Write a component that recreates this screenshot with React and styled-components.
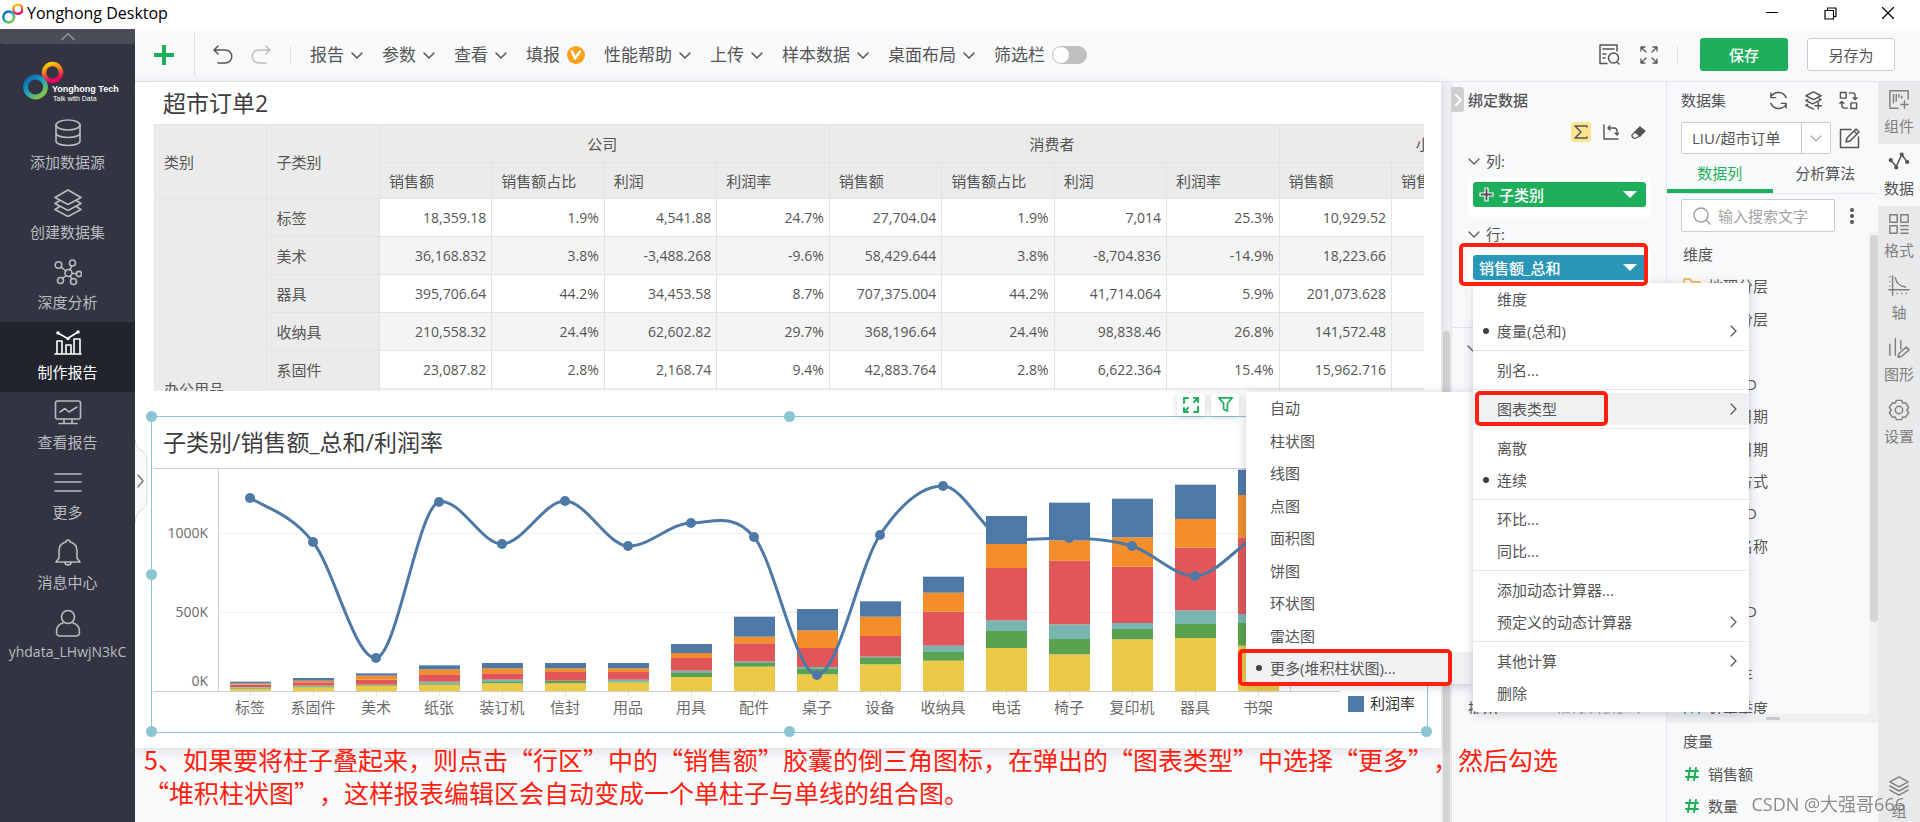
import React, { useState } from "react";
import styled, { createGlobalStyle, css } from "styled-components";

const GlobalStyle = createGlobalStyle`
  * {
    box-sizing: border-box;
  }

  body {
    margin: 0;
    overflow: hidden;
    background: #f8f9fb;
    color: #555;
    font-family: "Open Sans", "Noto Sans CJK SC", sans-serif;
    font-size: 15px;
    line-height: 20px;
  }

  button,
  input,
  select {
    font: inherit;
    color: inherit;
  }

  button {
    border: 0;
    padding: 0;
    background: none;
  }
`;

const UI_GREEN = "#1eaf5b";

/* ---------- shared ---------- */

const Svg = styled.svg`
  display: block;
  flex: none;
  fill: none;
  stroke: currentColor;
  stroke-width: ${({ $weight }) => $weight || 1.5};
  stroke-linecap: round;
  stroke-linejoin: round;
`;

const Icon = ({ size = 24, box = 24, weight, children }) => (
  <Svg
    width={size}
    height={size}
    viewBox={`0 0 ${box} ${box}`}
    $weight={weight}
    aria-hidden="true"
  >
    {children}
  </Svg>
);

const Chevron = ({ dir = "down", size = 12, weight = 1.5 }) => {
  const paths = {
    down: "M1 4l5 5 5-5",
    up: "M1 8l5-5 5 5",
    right: "M4 1l5 5-5 5",
  };
  return (
    <Icon size={size} box={12} weight={weight}>
      <path d={paths[dir]} />
    </Icon>
  );
};

const Marker = styled.span`
  position: absolute;
  border: 4px solid #ff2010;
  border-radius: 5px;
  pointer-events: none;
  z-index: 8;
`;

const Rings = ({ id }) => (
  <>
    <defs>
      <linearGradient id={`${id}-warm`} x1="0" y1="0" x2="0.3" y2="1">
        <stop offset="0" stopColor="#ffd200" />
        <stop offset="0.45" stopColor="#f58220" />
        <stop offset="1" stopColor="#e6005c" />
      </linearGradient>
      <linearGradient id={`${id}-cool`} x1="0" y1="0" x2="0.8" y2="1">
        <stop offset="0" stopColor="#0b5fae" />
        <stop offset="0.5" stopColor="#1ba1c4" />
        <stop offset="1" stopColor="#8cc63f" />
      </linearGradient>
    </defs>
    <circle cx="29.500" cy="11.500" r="8.500" stroke={`url(#${id}-warm)`} strokeWidth="4.500" />
    <circle cx="12.500" cy="26" r="10" stroke={`url(#${id}-cool)`} strokeWidth="4.800" />
  </>
);

/* ---------- title bar ---------- */

const TitleBar = styled.header`
  display: flex;
  align-items: center;
  height: 29px;
  flex: none;
  padding: 0 14px 3px 2px;
  background: #fff;
  color: #000;
`;

const AppName = styled.h1`
  flex: 1;
  margin: 0 0 0 4px;
  font-size: 16px;
  font-weight: 400;
  line-height: 20px;
`;

const WindowButton = styled.button`
  display: grid;
  place-items: center;
  width: 36px;
  height: 24px;
  margin-left: 22px;
`;

/* ---------- sidebar ---------- */

const Screen = styled.div`
  display: flex;
  flex-direction: column;
  height: 100vh;
`;

const Body = styled.div`
  display: flex;
  flex: 1;
  min-height: 0;
`;

const Sidebar = styled.nav`
  display: flex;
  flex-direction: column;
  flex: none;
  width: 135px;
  background: #323541;
  color: #b9bbc1;
`;

const FoldBar = styled.button`
  display: grid;
  place-items: center;
  height: 15px;
  background: #4a4c57;
  color: #8d8f97;
  border-radius: 0 0 3px 3px;
`;

const Brand = styled.div`
  height: 68px;
  padding: 17px 0 0 23px;
`;

const BrandText = styled.text`
  fill: #fff;
  stroke: none;
  font-family: "Liberation Sans", Arial, sans-serif;
  font-size: ${({ $small }) => ($small ? "7px" : "9px")};
  font-weight: ${({ $small }) => ($small ? 400 : 700)};
`;

const NavItem = styled.a`
  display: flex;
  flex-direction: column;
  align-items: center;
  gap: 5px;
  height: 70px;
  padding-top: 7px;
  color: inherit;
  font-size: ${({ $small }) => ($small ? 14 : 15)}px;
  text-decoration: none;
  white-space: nowrap;

  ${({ $active }) =>
    $active &&
    css`
      background: #22242d;
      color: #fff;
    `}
`;

const NAV = [
  {
    label: "添加数据源",
    icon: (
      <>
        <ellipse cx="14" cy="6" rx="12" ry="5" />
        <path d="M2 6v16c0 6 24 6 24 0V6M2 14c0 6 24 6 24 0" />
      </>
    ),
  },
  {
    label: "创建数据集",
    icon: (
      <path d="M14 1l13 7.500-13 7-13-7zM5 12l-4 2.500 13 7 13-7-4-2.500M5 18l-4 2.500 13 7 13-7-4-2.500" />
    ),
  },
  {
    label: "深度分析",
    icon: (
      <>
        <circle cx="14.500" cy="14" r="3.500" />
        <circle cx="4.500" cy="6" r="3.300" />
        <circle cx="18.500" cy="4" r="3" />
        <circle cx="25" cy="15" r="2.600" />
        <circle cx="6.500" cy="21.500" r="3" />
        <circle cx="19.500" cy="22.500" r="3" />
        <path d="M7 8l5 4M16 11l1.500-4M18 14.500h4.500M12 16.500l-3.500 3M16 17l2 3" />
      </>
    ),
  },
  {
    label: "制作报告",
    active: true,
    icon: (
      <>
        <path d="M1 25h26M3 25V12h5v13M12 25v-9h5v9M20 25V10h6v15" />
        <path d="M4 4l9.500 5.500L24 3" />
        <circle cx="4" cy="4" r="1" fill="currentColor" />
        <circle cx="14" cy="9.500" r="1" fill="currentColor" />
        <circle cx="24" cy="3" r="1" fill="currentColor" />
      </>
    ),
  },
  {
    label: "查看报告",
    icon: (
      <>
        <rect x="1.500" y="2" width="25" height="18" rx="2" />
        <path d="M6 13l5-3.500 4 3.500 8-5M10 20v4M18 20v4M5 24.500h18" />
      </>
    ),
  },
  { label: "更多", icon: <path d="M1 5h26M1 13h26M1 22h26" /> },
  {
    label: "消息中心",
    icon: (
      <path d="M14 1c-1.500 0-2 .8-2 2-4 1-7 4-7 9v7l-3 4h24l-3-4v-7c0-5-3-8-7-9 0-1.200-.5-2-2-2zM11 24c.5 2.500 5.500 2.500 6 0" />
    ),
  },
  {
    label: "yhdata_LHwjN3kC",
    small: true,
    icon: (
      <>
        <circle cx="14" cy="8" r="6.500" />
        <path d="M9 14c-4 1-6.500 4.500-6.500 9 0 2.500 1 4 3.500 4h16c2.500 0 3.500-1.500 3.500-4 0-4.500-2.500-8-6.500-9" />
      </>
    ),
  },
];

/* ---------- toolbar ---------- */

const Main = styled.main`
  display: flex;
  flex-direction: column;
  flex: 1;
  min-width: 0;
`;

const Toolbar = styled.div`
  display: flex;
  align-items: center;
  flex: none;
  height: 53px;
  padding: 0 25px 1px 18px;
  border-bottom: 1px solid #e4e6ec;
  font-size: 17px;
`;

const ToolButton = styled.button`
  display: flex;
  align-items: center;
  gap: 7px;
  margin-right: ${({ $gap = 19 }) => $gap}px;
  color: ${({ $color }) => $color || "inherit"};
  white-space: nowrap;
`;

const Rule = styled.span`
  width: 1px;
  height: ${({ $tall }) => ($tall ? 43 : 18)}px;
  margin-right: ${({ $gap }) => $gap}px;
  background: #dcdee2;
`;

const Spacer = styled.span`
  flex: 1;
`;

const SwitchLabel = styled.label`
  display: flex;
  align-items: center;
  gap: 7px;
`;

const Switch = styled.input`
  appearance: none;
  width: 35px;
  height: 18px;
  margin: 0;
  padding: 1px;
  border-radius: 9px;
  background: #bfbfbf;

  &::before {
    content: "";
    display: block;
    width: 16px;
    height: 16px;
    border-radius: 50%;
    background: #fff;
  }

  &:checked {
    background: ${UI_GREEN};
  }

  &:checked::before {
    margin-left: auto;
  }
`;

const SaveButton = styled.button`
  width: 88px;
  height: 33px;
  border-radius: 3px;
  font-size: 15px;
  background: ${UI_GREEN};
  color: #fff;
  font-weight: 500;

  ${({ $plain }) =>
    $plain &&
    css`
      margin-left: 19px;
      border: 1px solid #c9cbd0;
      background: #fff;
      color: #555;
      font-weight: 400;
    `}
`;

/* ---------- canvas ---------- */

const Workspace = styled.div`
  display: flex;
  flex: 1;
  min-height: 0;
`;

const CanvasPane = styled.section`
  position: relative;
  display: flex;
  flex: 1;
  flex-direction: column;
  min-width: 0;
`;

const Sheet = styled.div`
  display: flex;
  flex: 1;
  flex-direction: column;
  min-height: 0;
  margin-bottom: 74px;
  background: #fff;
  box-shadow: 0 2px 12px rgba(60, 70, 90, 0.16);
`;

const WidgetTitle = styled.h2`
  margin: 0;
  padding-left: ${({ $inset }) => $inset}px;
  color: #3d3d3d;
  font-size: 23px;
  font-weight: 400;
  line-height: ${({ $line }) => $line}px;
`;

const TableFrame = styled.div`
  flex: 1;
  min-height: 0;
  margin: 0 17px 0 19px;
  overflow: hidden;
`;

const PivotTable = styled.table`
  width: 1463px;
  border-collapse: collapse;
  table-layout: fixed;

  th,
  td {
    height: 38px;
    padding: 0 5px 0 9px;
    border: 1px solid #e3e3e3;
    font-weight: 400;
    text-align: left;
    white-space: nowrap;
  }

  th {
    background: #ebebeb;
  }

  thead tr + tr th {
    height: 36px;
  }

  th[colspan] {
    padding: 0 4px 0 0;
    text-align: center;
  }

  td {
    font-size: 14px;
    text-align: right;
  }

  tbody tr:nth-child(even) td {
    background: #f4f4f4;
  }
`;

const MEASURES = ["销售额", "销售额占比", "利润", "利润率"];
const ROWS = [
  ["标签", "18,359.18", "1.9%", "4,541.88", "24.7%", "27,704.04", "1.9%", "7,014", "25.3%", "10,929.52"],
  ["美术", "36,168.832", "3.8%", "-3,488.268", "-9.6%", "58,429.644", "3.8%", "-8,704.836", "-14.9%", "18,223.66"],
  ["器具", "395,706.64", "44.2%", "34,453.58", "8.7%", "707,375.004", "44.2%", "41,714.064", "5.9%", "201,073.628"],
  ["收纳具", "210,558.32", "24.4%", "62,602.82", "29.7%", "368,196.64", "24.4%", "98,838.46", "26.8%", "141,572.48"],
  ["系固件", "23,087.82", "2.8%", "2,168.74", "9.4%", "42,883.764", "2.8%", "6,622.364", "15.4%", "15,962.716"],
  [],
  [],
  [],
  [],
  [],
];

const OrdersTable = () => (
  <PivotTable>
    <thead>
      <tr>
        <th rowSpan={2}>类别</th>
        <th rowSpan={2}>子类别</th>
        <th colSpan={4}>公司</th>
        <th colSpan={4}>消费者</th>
        <th colSpan={3}>小型企业</th>
      </tr>
      <tr>
        {[...MEASURES, ...MEASURES, ...MEASURES.slice(0, 3)].map((name, i) => (
          <th key={i}>{name}</th>
        ))}
      </tr>
    </thead>
    <tbody>
      {ROWS.map((row, i) => (
        <tr key={i}>
          {i === 0 && <th rowSpan={ROWS.length}>办公用品</th>}
          <th>{row[0]}</th>
          {Array.from({ length: 11 }, (_, col) => (
            <td key={col}>{row[col + 1]}</td>
          ))}
        </tr>
      ))}
    </tbody>
  </PivotTable>
);

const ChartFrame = styled.div`
  position: relative;
  flex: none;
  margin: 25px 13px 15px 16px;
  border: 1px solid #8bc4d3;
`;

const Handle = styled.i`
  position: absolute;
  left: ${({ $x }) => $x};
  top: ${({ $y }) => $y};
  width: 11px;
  height: 11px;
  margin: -6px;
  border-radius: 50%;
  background: #8bc4d3;
`;

const ChartSvg = styled.svg`
  display: block;
  width: 100%;
  height: 264px;

  text {
    fill: #6b6b6b;
    font-size: 15px;
  }
`;

const FloatTools = styled.div`
  position: absolute;
  top: -24px;
  right: 188px;
  display: flex;
  gap: 6px;
`;

const FloatButton = styled.button`
  display: grid;
  place-items: center;
  width: 28px;
  height: 23px;
  border-radius: 4px;
  background: #fff;
  color: ${UI_GREEN};
  box-shadow: 0 1px 6px rgba(60, 70, 90, 0.25);
`;

// segments run from the axis up: yellow, green, teal, red, orange, blue
const SEGMENT_COLORS = ["#ecc948", "#5aa24f", "#79b5b1", "#e15658", "#f38e2b", "#4e79a7"];
const STACKS = [
  { name: "标签", parts: [7, 3, 2, 7, 4, 5], rate: 30 },
  { name: "系固件", parts: [11, 3, 2, 10, 5, 8], rate: 74 },
  { name: "美术", parts: [16, 3, 0, 15, 12, 7], rate: 190 },
  { name: "纸张", parts: [19, 4, 5, 22, 15, 12], rate: 34 },
  { name: "装订机", parts: [23, 4, 7, 19, 15, 16], rate: 76 },
  { name: "信封", parts: [23, 8, 0, 26, 11, 16], rate: 33 },
  { name: "用品", parts: [26, 3, 5, 23, 11, 16], rate: 78 },
  { name: "用具", parts: [42, 12, 7, 38, 15, 27], rate: 55 },
  { name: "配件", parts: [73, 11, 4, 55, 20, 60], rate: 69 },
  { name: "桌子", parts: [50, 16, 6, 57, 53, 64], rate: 207 },
  { name: "设备", parts: [80, 19, 4, 62, 58, 46], rate: 67 },
  { name: "收纳具", parts: [91, 26, 19, 102, 57, 48], rate: 18 },
  { name: "电话", parts: [129, 51, 32, 157, 72, 84], rate: 71 },
  { name: "椅子", parts: [110, 46, 44, 191, 61, 113], rate: 70 },
  { name: "复印机", parts: [155, 31, 18, 169, 88, 116], rate: 78 },
  { name: "器具", parts: [159, 42, 41, 188, 86, 103], rate: 108 },
  { name: "书架", parts: [136, 68, 27, 230, 127, 76], rate: 67 },
];

const AXIS_X = 67;
const BASE_Y = 223;
const STEP = 63;
const centerOf = (i) => AXIS_X + STEP * i + 31;

const smoothLine = (values) => {
  const slopes = values.map((v, i) => {
    const before = values[i - 1];
    const after = values[i + 1];
    if (before === undefined) return (after - v) * 0.8;
    if (after === undefined) return (v - before) * 0.8;
    const turning = (v - before) * (after - v) < 0;
    return ((after - before) / 2) * (turning ? 0.25 : 1);
  });
  return values
    .map((v, i) => {
      if (i === 0) return `M${centerOf(0)} ${v}`;
      const reach = STEP / 3;
      const c1 = `${centerOf(i - 1) + reach} ${values[i - 1] + slopes[i - 1] / 3}`;
      const c2 = `${centerOf(i) - reach} ${v - slopes[i] / 3}`;
      return `C${c1} ${c2} ${centerOf(i)} ${v}`;
    })
    .join("");
};

const ComboChart = () => {
  const axisEnd = AXIS_X + STEP * STACKS.length;
  return (
    <ChartSvg viewBox="0 0 1275 264" preserveAspectRatio="xMinYMin meet">
      <path d={`M${AXIS_X} 65.500H${axisEnd}M${AXIS_X} 144.500H${axisEnd}`} stroke="#efefef" />
      <path d="M2 0.500H1188M2 223.500H1188" stroke="#cfcfcf" />
      <path d={`M${AXIS_X - 0.5} 0V223M${axisEnd + 0.5} 0V223`} stroke="#cfcfcf" />
      {[["1000K", 70], ["500K", 149], ["0K", 218]].map(([tick, y]) => (
        <text key={tick} x="56" y={y} textAnchor="end" style={{ fontSize: 14 }}>
          {tick}
        </text>
      ))}
      {STACKS.map(({ name, parts }, i) => {
        let top = BASE_Y;
        return (
          <g key={name}>
            {parts.map((part, k) => {
              const height = part / 3;
              top -= height;
              return (
                <rect
                  key={k}
                  x={centerOf(i) - 20}
                  y={top}
                  width="41"
                  height={height}
                  fill={SEGMENT_COLORS[k]}
                />
              );
            })}
            <path d={`M${centerOf(i) + 0.5} 224v4`} stroke="#e3e3e3" />
            <text x={centerOf(i)} y="245" textAnchor="middle">
              {name}
            </text>
          </g>
        );
      })}
      <path
        d={smoothLine(STACKS.map((s) => s.rate))}
        fill="none"
        stroke="#4e79a7"
        strokeWidth="3"
      />
      {STACKS.map((s, i) => (
        <circle key={s.name} cx={centerOf(i)} cy={s.rate} r="5" fill="#4e79a7" />
      ))}
      <rect x="1196" y="228" width="16" height="16" fill="#4e79a7" />
      <text x="1218" y="241" style={{ fill: "#333" }}>
        利润率
      </text>
    </ChartSvg>
  );
};

const DrawerTab = styled.button`
  position: absolute;
  left: 0;
  top: 357px;
  color: #777;
`;

const Note = styled.p`
  position: absolute;
  left: 9px;
  bottom: 13px;
  z-index: 3;
  margin: 0;
  color: #ff1e0f;
  font-family: "Noto Sans CJK SC", sans-serif;
  font-size: 25px;
  line-height: 33px;
  text-spacing-trim: space-all;
  white-space: nowrap;
`;

const ScrollTrack = styled.div`
  display: flex;
  flex: none;
  flex-direction: column;
  align-items: center;
  width: ${({ $width }) => $width}px;
  padding-top: ${({ $offset }) => $offset}px;
  background: #f0f1f3;
`;

const ScrollThumb = styled.div`
  width: ${({ $width }) => $width}px;
  flex: ${({ $length }) => ($length ? `0 0 ${$length}px` : 1)};
  border-radius: 4px 4px ${({ $length }) => ($length ? "4px 4px" : "0 0")};
  background: #d4d4d5;
`;

/* ---------- binding panel ---------- */

const BindingPanel = styled.section`
  position: relative;
  flex: none;
  width: 215px;
  border-left: 1px solid #e4e6ec;
`;

const PanelToggle = styled.button`
  position: absolute;
  left: -1px;
  top: 5px;
  display: grid;
  place-items: center;
  width: 13px;
  height: 25px;
  border-radius: 0 3px 3px 0;
  background: #cfcfd1;
  color: #fff;
`;

const PanelHead = styled.div`
  display: flex;
  align-items: center;
  height: 38px;
  padding: 0 14px 2px 16px;
`;

const PanelTitle = styled.h3`
  margin: 0;
  font-size: 15px;
  font-weight: ${({ $bold }) => ($bold ? 500 : 400)};
  line-height: 20px;
`;

const BindingTools = styled.div`
  display: flex;
  align-items: center;
  justify-content: flex-end;
  gap: 12px;
  height: 24px;
  padding-right: 20px;
`;

const SigmaButton = styled.button`
  display: grid;
  place-items: center;
  width: 20px;
  height: 20px;
  border-radius: 3px;
  background: #fde391;
`;

const Shelf = styled.div`
  padding: 5px 15px 0 16px;
`;

const ShelfLabel = styled.div`
  display: flex;
  align-items: center;
  gap: 6px;
  height: 28px;
  padding-bottom: 4px;
`;

const DropZone = styled.div`
  min-height: ${({ $tall }) => ($tall ? 70 : 40)}px;
  padding: 5px;
  border-radius: 3px;
  background: #fff;
`;

const Capsule = styled.div`
  position: relative;
  display: flex;
  align-items: center;
  gap: 5px;
  height: 25px;
  padding: 0 9px 0 6px;
  border-radius: 3px;
  background: ${({ $color }) => $color};
  color: #fff;
  font-weight: 500;
`;

const CapsuleArrow = styled.button`
  margin-left: auto;
  border: 7px solid transparent;
  border-top-color: #fff;
  border-bottom: 0;
`;

const MarkSection = styled.div`
  display: flex;
  flex-direction: column;
  height: 387px;
  margin-top: 7px;
  padding: 8px 20px 0 15px;
  border-top: 1px solid #e4e6ec;
  overflow: hidden;
`;

const MarkRow = styled.div`
  display: flex;
  justify-content: space-between;
  flex: none;
  height: 16px;
  padding-left: 1px;
`;

const Hint = styled.span`
  color: #a9a9a9;
`;

/* ---------- context menus ---------- */

const menuBox = css`
  position: absolute;
  background: #fff;
  box-shadow: 0 2px 10px rgba(50, 55, 70, 0.25);
`;

const Menu = styled.div`
  ${menuBox}
  z-index: 5;
  top: 28px;
  left: 0;
  width: 276px;
  border-radius: 0 0 4px 4px;
  color: #555;
  font-weight: 400;
`;

const MenuGroup = styled.div`
  padding: ${({ $first }) => ($first ? 0 : 3)}px 0 3px;
  border-bottom: 1px solid #e6e8ec;

  &:last-of-type {
    border-bottom: 0;
  }
`;

const MenuItem = styled.button`
  position: relative;
  display: flex;
  align-items: center;
  width: 100%;
  height: 32px;
  padding: 0 10px 0 24px;
  background: ${({ $active }) => ($active ? "#f0f1f3" : "transparent")};
  text-align: left;

  svg {
    margin-left: auto;
  }
`;

const Dot = styled.i`
  position: absolute;
  left: 10px;
  width: 6px;
  height: 6px;
  border-radius: 50%;
  background: #404040;
`;

const SubMenu = styled.div`
  ${menuBox}
  z-index: 4;
  top: 137px;
  right: 172px;
  width: 228px;
  color: #555;
  font-weight: 400;
`;

const MENU = [
  [{ label: "维度" }, { label: "度量(总和)", dot: true, more: true }],
  [{ label: "别名..." }],
  [{ label: "图表类型", more: true, active: true, marked: true }],
  [{ label: "离散" }, { label: "连续", dot: true }],
  [{ label: "环比..." }, { label: "同比..." }],
  [{ label: "添加动态计算器..." }, { label: "预定义的动态计算器", more: true }],
  [{ label: "其他计算", more: true }, { label: "删除" }],
];

const CHART_TYPES = ["自动", "柱状图", "线图", "点图", "面积图", "饼图", "环状图", "雷达图"];

const TypeList = styled.div`
  display: grid;
  align-content: space-between;
  height: 292px;
`;

const ItemMarker = styled(Marker)`
  left: 2px;
  top: -2px;
  width: 133px;
  height: 35px;
`;

const MoreMarker = styled(Marker)`
  left: -8px;
  top: -3px;
  width: 214px;
  height: 37px;
`;

const CapsuleMarker = styled(Marker)`
  left: -14px;
  top: -12px;
  width: 189px;
  height: 43px;
`;

const MeasureMenu = () => (
  <Menu role="menu">
    {MENU.map((group, i) => (
      <MenuGroup key={i} $first={i === 0}>
        {group.map((item) => (
          <MenuItem key={item.label} $active={item.active} role="menuitem">
            {item.dot && <Dot />}
            {item.label}
            {item.more && <Chevron dir="right" weight={1.2} />}
            {item.marked && <ItemMarker />}
          </MenuItem>
        ))}
      </MenuGroup>
    ))}
  </Menu>
);

const ChartTypeMenu = () => (
  <SubMenu role="menu">
    <TypeList>
      {CHART_TYPES.map((type) => (
        <MenuItem key={type} role="menuitem">
          {type}
        </MenuItem>
      ))}
      <MenuItem $active role="menuitem">
        <Dot />
        更多(堆积柱状图)...
        <MoreMarker />
      </MenuItem>
    </TypeList>
  </SubMenu>
);

/* ---------- data panel ---------- */

const DataPanel = styled.section`
  display: flex;
  flex-direction: column;
  flex: none;
  width: 212px;
  border-left: 1px solid #e4e6ec;
  overflow: hidden;

  > * {
    flex: none;
  }
`;

const DataHead = styled.div`
  display: flex;
  align-items: center;
  gap: 16px;
  height: 38px;
  padding: 0 20px 2px 14px;

  h3 {
    flex: 1;
  }
`;

const SourceRow = styled.div`
  display: flex;
  align-items: center;
  justify-content: space-between;
  padding: 2px 18px 0 14px;
`;

const SelectBox = styled.div`
  display: flex;
  align-items: center;
  width: 150px;
  height: 32px;
  border: 1px solid #c9cbd0;
  border-radius: 2px;
  background: #fff;
  color: #b5b5b5;

  svg {
    margin: 0 8px;
  }
`;

const Select = styled.select`
  appearance: none;
  width: 120px;
  height: 30px;
  padding: 0 0 0 10px;
  border: 0;
  border-right: 1px solid #c9cbd0;
  background: transparent;
  color: #555;
`;

const Tabs = styled.div`
  display: flex;
  height: 40px;
  border-bottom: 1px solid #e4e6ec;
`;

const Tab = styled.button`
  flex: 1;
  padding-top: 3px;
  border-bottom: 4px solid ${({ $active }) => ($active ? UI_GREEN : "transparent")};
  color: ${({ $active }) => ($active ? UI_GREEN : "inherit")};
`;

const SearchRow = styled.div`
  display: flex;
  align-items: center;
  justify-content: space-between;
  padding: 5px 22px 0 14px;
`;

const SearchBox = styled.label`
  display: flex;
  align-items: center;
  gap: 7px;
  width: 154px;
  height: 33px;
  padding-left: 11px;
  border: 1px solid #c9cbd0;
  border-radius: 2px;
  background: #fff;
  color: #9b9b9b;
`;

const SearchInput = styled.input`
  width: 110px;
  padding: 0;
  border: 0;
  outline: 0;
  background: none;

  &::placeholder {
    color: #a5a5a5;
    opacity: 1;
  }
`;

const FieldScroll = styled.div`
  display: flex;
  height: 482px;
  overflow: hidden;
`;

const FieldList = styled.ul`
  display: grid;
  flex: 1;
  grid-auto-rows: 32px;
  align-content: space-between;
  height: ${({ $height }) => $height}px;
  margin: 0;
  padding: ${({ $pad }) => $pad}px 0 0 16px;
  list-style: none;
`;

const Field = styled.li`
  display: flex;
  align-items: center;
  gap: 7px;
  white-space: nowrap;
`;

const FieldMark = styled.span`
  display: grid;
  place-items: center;
  width: 18px;
  color: ${({ $color }) => $color || UI_GREEN};
`;

const Splitter = styled.div`
  display: grid;
  place-items: center;
  height: 9px;
  background: #eef0f2;

  &::before {
    content: "";
    width: 14px;
    height: 3px;
    border-radius: 2px;
    background: #c6c7ca;
  }
`;

const DIMENSIONS = [
  "地理分层", "产品分层", "类别", "订单 ID", "订单日期", "邮寄日期", "邮寄方式",
  "客户 ID", "客户名称", "细分", "产品 ID", "国家", "订单年", "订单季度",
];

/* ---------- rail ---------- */

const Rail = styled.nav`
  display: flex;
  flex-direction: column;
  flex: none;
  width: 42px;
  overflow: hidden;
  background: #e8e9eb;
  color: #808080;
`;

const RailItem = styled.button`
  display: flex;
  flex: none;
  flex-direction: column;
  align-items: center;
  gap: 5px;
  height: ${({ $last }) => ($last ? 53 : 62)}px;
  margin-top: ${({ $last }) => ($last ? "auto" : 0)};
  padding-top: 7px;
  background: ${({ $active }) => ($active ? "#f8f9fb" : "transparent")};
  color: ${({ $active }) => ($active ? "#555" : "inherit")};
`;

const RAIL = [
  {
    label: "组件",
    icon: <path d="M11 21H2V2h20v9M6 6v9M9 6v7M12 6v3M15 8v2M18 13v8M14 17h8" />,
  },
  {
    label: "数据",
    icon: (
      <>
        <path d="M3 10l6 7 6-13 6 8" />
        <circle cx="3" cy="10" r="1.500" fill="currentColor" />
        <circle cx="9" cy="18" r="1.500" fill="currentColor" />
        <circle cx="15" cy="4" r="1.500" fill="currentColor" />
        <circle cx="21" cy="12" r="1.500" fill="currentColor" />
      </>
    ),
  },
  {
    label: "格式",
    icon: <path d="M2 2h8v8H2zM14 2h8v8h-8zM2 14h8v8H2zM14 14h8M14 18h8M14 22h8" />,
  },
  {
    label: "轴",
    icon: <path d="M5 1v21M1 16h22M8 3c1 6 4 9 11 10M2 2v.1M2 7v.1M2 12v.1M10 20v.1M15 20v.1M20 20v.1" />,
  },
  {
    label: "图形",
    icon: <path d="M2 8v12M8 2v18M14 4v9M11 22l1-4 8-7 3 3-8 7z" />,
  },
  {
    label: "设置",
    icon: (
      <>
        <path d="M9 1.500h6l1 3 3-.5 3.500 5-2 3 2 3-3.500 5-3-.5-1 3H9l-1-3-3 .5-3.500-5 2-3-2-3L5 4l3 .5z" />
        <circle cx="12" cy="12" r="4" />
      </>
    ),
  },
];

const Watermark = styled.div`
  position: fixed;
  right: 15px;
  bottom: 5px;
  z-index: 9;
  color: rgba(110, 110, 110, 0.8);
  font-family: "Open Sans", "Noto Sans CJK SC", sans-serif;
  font-size: 18px;
  line-height: 26px;
`;

const MENUS = ["报告", "参数", "查看", "填报", "性能帮助", "上传", "样本数据", "桌面布局"];

const App = () => {
  const [filterBar, setFilterBar] = useState(false);
  const [keyword, setKeyword] = useState("");

  return (
    <Screen>
      <GlobalStyle />
      <TitleBar>
        <Icon size={21} box={39}>
          <Rings id="title" />
        </Icon>
        <AppName>Yonghong Desktop</AppName>
        <WindowButton aria-label="最小化">
          <Icon size={12} box={12} weight={1}>
            <path d="M0 5.500h12" />
          </Icon>
        </WindowButton>
        <WindowButton aria-label="还原">
          <Icon size={13} box={13} weight={1.2}>
            <path d="M1 3.500h8.500V12H1zM3.500 3.500V1H12v8.500H9.500" />
          </Icon>
        </WindowButton>
        <WindowButton aria-label="关闭">
          <Icon size={12} box={12} weight={1.2}>
            <path d="M0.500 0.500l11 11M11.500 0.500l-11 11" />
          </Icon>
        </WindowButton>
      </TitleBar>

      <Body>
        <Sidebar>
          <FoldBar aria-label="收起">
            <Chevron dir="up" size={14} />
          </FoldBar>
          <Brand>
            <Svg width="104" height="44" viewBox="0 0 104 44" role="img" aria-label="Yonghong Tech">
              <Rings id="side" />
              <BrandText x="29" y="31">Yonghong Tech</BrandText>
              <BrandText x="30" y="40" $small>Talk with Data</BrandText>
            </Svg>
          </Brand>
          {NAV.map((item) => (
            <NavItem key={item.label} href="#" $active={item.active} $small={item.small}>
              <Icon size={28} box={28} weight={1.6}>
                {item.icon}
              </Icon>
              {item.label}
            </NavItem>
          ))}
        </Sidebar>

        <Main>
          <Toolbar>
            <ToolButton aria-label="新建" $gap={19} $color={UI_GREEN}>
              <Icon size={22} box={22} weight={4}>
                <path d="M11 1v20M1 11h20" strokeLinecap="butt" />
              </Icon>
            </ToolButton>
            <Rule $tall $gap={18} />
            <ToolButton aria-label="撤销" $gap={18}>
              <Icon size={20} box={20}>
                <path d="M5 1L1 5l4 4M1 5h11c9 0 9 13 0 13H5" />
              </Icon>
            </ToolButton>
            <ToolButton aria-label="重做" $gap={19} $color="#bdbdbd">
              <Icon size={20} box={20}>
                <path d="M15 1l4 4-4 4M19 5H8c-9 0-9 13 0 13h7" />
              </Icon>
            </ToolButton>
            <Rule $gap={19} />
            {MENUS.map((name) => (
              <ToolButton key={name}>
                {name}
                {name === "填报" ? (
                  <Icon size={18} box={18}>
                    <circle cx="9" cy="9" r="9" fill="#f9a11b" stroke="none" />
                    <path d="M5 5.500l3 7 5-7" stroke="#fff" strokeWidth="2.500" />
                  </Icon>
                ) : (
                  <Chevron />
                )}
              </ToolButton>
            ))}
            <SwitchLabel>
              筛选栏
              <Switch
                type="checkbox"
                checked={filterBar}
                onChange={(e) => setFilterBar(e.target.checked)}
              />
            </SwitchLabel>
            <Spacer />
            <ToolButton aria-label="预览" $gap={20}>
              <Icon size={21} box={21}>
                <path d="M8 19.500H1V1h17v6M4 5h11M4 10h3M4 14h2M18.500 18.500l1.500 1.500" />
                <circle cx="14.500" cy="14" r="5" />
              </Icon>
            </ToolButton>
            <ToolButton aria-label="全屏">
              <Icon size={18} box={18} weight={1.3}>
                <path d="M1 5V1h4M1 1l5 5M13 1h4v4M17 1l-5 5M1 13v4h4M1 17l5-5M17 13v4h-4M17 17l-5-5" />
              </Icon>
            </ToolButton>
            <Rule $gap={22} />
            <SaveButton>保存</SaveButton>
            <SaveButton $plain>另存为</SaveButton>
          </Toolbar>

          <Workspace>
            <CanvasPane>
              <Sheet>
                <WidgetTitle $inset={28} $line={42}>超市订单2</WidgetTitle>
                <TableFrame>
                  <OrdersTable />
                </TableFrame>
                <ChartFrame>
                  <WidgetTitle $inset={11} $line={51}>子类别/销售额_总和/利润率</WidgetTitle>
                  <ComboChart />
                  <FloatTools>
                    <FloatButton aria-label="放大">
                      <Icon size={18} box={18} weight={2}>
                        <path d="M2 7V2h4M12 2h4v4M16 2l-4 4M2 12v4h4M2 16l4-4M16 11v5h-4" />
                      </Icon>
                    </FloatButton>
                    <FloatButton aria-label="筛选">
                      <Icon size={17} box={18} weight={1.8}>
                        <path d="M2 2h14l-5 6v8l-4-2V8z" />
                      </Icon>
                    </FloatButton>
                  </FloatTools>
                  {[
                    ["0", "0"],
                    ["50%", "0"],
                    ["100%", "0"],
                    ["0", "50%"],
                    ["100%", "50%"],
                    ["0", "100%"],
                    ["50%", "100%"],
                    ["100%", "100%"],
                  ].map(([x, y]) => (
                    <Handle key={x + y} $x={x} $y={y} />
                  ))}
                </ChartFrame>
              </Sheet>
              <DrawerTab aria-label="展开">
                <Svg width="14" height="84" viewBox="0 0 14 84" $weight={1}>
                  <path
                    d="M0 0c0 14 12 10 12 20v42c0 10-12 8-12 22"
                    fill="#f8f9fb"
                    stroke="#d5d7dc"
                  />
                  <path d="M3 36l5 6-5 6" strokeWidth="1.400" />
                </Svg>
              </DrawerTab>
              <Note>
                5、如果要将柱子叠起来，则点击“行区”中的“销售额”胶囊的倒三角图标，在弹出的“图表类型”中选择“更多”，然后勾选
                <br />
                “堆积柱状图”，这样报表编辑区会自动变成一个单柱子与单线的组合图。
              </Note>
            </CanvasPane>

            <ScrollTrack $width={10} $offset={249}>
              <ScrollThumb $width={7} />
            </ScrollTrack>

            <BindingPanel>
              <PanelToggle aria-label="收起面板">
                <Chevron dir="right" weight={1.8} />
              </PanelToggle>
              <PanelHead>
                <PanelTitle $bold>绑定数据</PanelTitle>
              </PanelHead>
              <BindingTools>
                <SigmaButton aria-label="汇总">
                  <Icon size={16} box={16}>
                    <path d="M14 3V2H2l6 6-6 6h12v-1" />
                  </Icon>
                </SigmaButton>
                <button aria-label="行列互换">
                  <Icon size={16} box={16} weight={1.4}>
                    <path d="M1 1v14h14M5 4h6c2 0 3 1 3 3v4M7 2L5 4l2 2M12 9l2 2 2-2" />
                  </Icon>
                </button>
                <button aria-label="清除">
                  <Icon size={15} box={15} weight={1.3}>
                    <path d="M9 2l5 4-5 5-5-4z" fill="currentColor" />
                    <path d="M4 7l-3 3c-.5 2 2 4 4 3l4-2" />
                  </Icon>
                </button>
              </BindingTools>
              <Shelf>
                <ShelfLabel>
                  <Chevron weight={1.2} />
                  列:
                </ShelfLabel>
                <DropZone>
                  <Capsule $color={UI_GREEN}>
                    <Icon size={15} box={15} weight={1.2}>
                      <path d="M6 1h3v5h5v3H9v5H6V9H1V6h5z" fill="#505050" />
                    </Icon>
                    子类别
                    <CapsuleArrow aria-label="子类别选项" />
                  </Capsule>
                </DropZone>
              </Shelf>
              <Shelf>
                <ShelfLabel>
                  <Chevron weight={1.2} />
                  行:
                </ShelfLabel>
                <DropZone $tall>
                  <Capsule $color="#2a97b9">
                    销售额_总和
                    <CapsuleArrow aria-label="销售额选项" />
                    <CapsuleMarker />
                    <MeasureMenu />
                    <ChartTypeMenu />
                  </Capsule>
                </DropZone>
              </Shelf>
              <MarkSection>
                <ShelfLabel>
                  <Chevron weight={1.2} />
                  标记:
                </ShelfLabel>
                <Spacer />
                <MarkRow>
                  提示
                  <Hint>拖拽列到这里</Hint>
                </MarkRow>
              </MarkSection>
            </BindingPanel>

            <DataPanel>
              <DataHead>
                <PanelTitle>数据集</PanelTitle>
                <button aria-label="刷新">
                  <Icon size={19} box={20}>
                    <path d="M2 2v5h5M2 6c4-6 13-6 16 1M18 18v-5h-5M18 14c-4 6-13 6-16-1" />
                  </Icon>
                </button>
                <button aria-label="新建数据集">
                  <Icon size={19} box={20}>
                    <path d="M10 1l8 4-8 4-8-4zM4 9l-2 1 7 3.500 9-4.500-2-1M4 14l-2 1 8 4M15 12v7M11.500 15.500h7" />
                  </Icon>
                </button>
                <button aria-label="替换数据集">
                  <Icon size={19} box={20}>
                    <path d="M1.500 1.500h6v6h-6zM12.500 12.500h6v6h-6zM11 2h3c2 0 3 1 3 3v4M15 7l2 2 2-2M9 18H6c-2 0-3-1-3-3v-4M1 13l2-2 2 2" />
                  </Icon>
                </button>
              </DataHead>
              <SourceRow>
                <SelectBox>
                  <Select aria-label="数据集" defaultValue="orders">
                    <option value="orders">LIU/超市订单</option>
                  </Select>
                  <Chevron />
                </SelectBox>
                <button aria-label="编辑数据集">
                  <Icon size={21} box={21}>
                    <path d="M12 1.500H1.500v18h18V9M7 14l1-4 9-9 3 3-9 9zM15 3l3 3" />
                  </Icon>
                </button>
              </SourceRow>
              <Tabs>
                <Tab $active>数据列</Tab>
                <Tab>分析算法</Tab>
              </Tabs>
              <SearchRow>
                <SearchBox>
                  <Icon size={18} box={18} weight={1.3}>
                    <circle cx="8" cy="8" r="7" />
                    <path d="M13 13l4 4" />
                  </Icon>
                  <SearchInput
                    aria-label="搜索"
                    placeholder="输入搜索文字"
                    value={keyword}
                    onChange={(e) => setKeyword(e.target.value)}
                  />
                </SearchBox>
                <button aria-label="更多操作">
                  <Icon size={16} box={16}>
                    <g fill="currentColor" stroke="none">
                      <circle cx="12" cy="2" r="2" />
                      <circle cx="12" cy="8" r="2" />
                      <circle cx="12" cy="14" r="2" />
                    </g>
                  </Icon>
                </button>
              </SearchRow>
              <FieldScroll>
                <FieldList $height={492} $pad={6}>
                  <Field>维度</Field>
                  {DIMENSIONS.map((name, i) => (
                    <Field key={name}>
                      <FieldMark $color={i < 2 ? "#f6a83c" : UI_GREEN}>
                        <Icon size={18} box={18}>
                          {i < 2 ? (
                            <path d="M1 16V2h6l2 3h8v11z" />
                          ) : (
                            <path d="M2 3h14v13H2zM2 7h14M9 9v5" />
                          )}
                        </Icon>
                      </FieldMark>
                      {name}
                    </Field>
                  ))}
                </FieldList>
                <ScrollTrack $width={9} $offset={3}>
                  <ScrollThumb $width={8} $length={387} />
                </ScrollTrack>
              </FieldScroll>
              <Splitter />
              <FieldList $height={100} $pad={2}>
                <Field>度量</Field>
                {["销售额", "数量"].map((name) => (
                  <Field key={name}>
                    <FieldMark>
                      <Icon size={14} box={14} weight={2}>
                        <path d="M5 1L3 13M11 1L9 13M1 4h12M1 10h12" />
                      </Icon>
                    </FieldMark>
                    {name}
                  </Field>
                ))}
              </FieldList>
            </DataPanel>

            <Rail>
              {RAIL.map((item) => (
                <RailItem key={item.label} $active={item.label === "数据"}>
                  <Icon size={22} weight={1.6}>
                    {item.icon}
                  </Icon>
                  {item.label}
                </RailItem>
              ))}
              <RailItem $last>
                <Icon size={20} weight={1.8}>
                  <path d="M12 1l11 6-11 6L1 7zM1 12l11 6 11-6M1 17l11 6 11-6" />
                </Icon>
                组
              </RailItem>
            </Rail>
          </Workspace>
        </Main>
      </Body>
      <Watermark>CSDN @大强哥666</Watermark>
    </Screen>
  );
};

export default App;
